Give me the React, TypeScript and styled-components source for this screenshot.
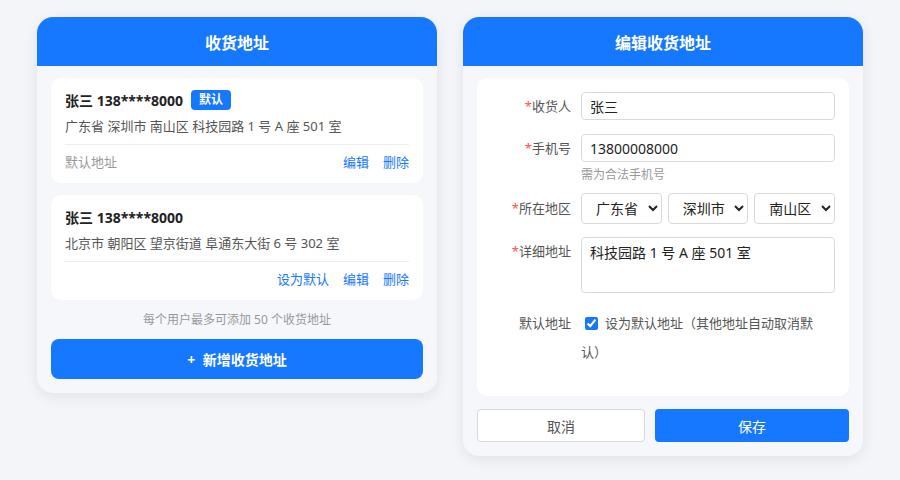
import React from 'react'
import styled, { createGlobalStyle } from 'styled-components'

const GlobalStyle = createGlobalStyle`
  html, body {
    margin: 0;
    padding: 0;
    background: #f4f5f9;
    font-family: "Noto Sans", "Noto Sans CJK SC", sans-serif;
    color: #222;
  }
  * { box-sizing: border-box; }
`

const BLUE = '#1677ff'

const Page = styled.div`
  display: flex;
  justify-content: center;
  align-items: flex-start;
  gap: 26px;
  padding-top: 17px;
  width: 900px;
  height: 480px;
`

const Card = styled.div`
  width: 400px;
  background: #f5f7fa;
  border-radius: 16px;
  overflow: hidden;
  box-shadow: 0 4px 14px rgba(0, 0, 0, 0.08);
`

const Header = styled.div`
  height: 49px;
  background: ${BLUE};
  color: #fff;
  font-size: 16px;
  font-weight: 700;
  display: flex;
  align-items: center;
  justify-content: center;
`

const Body = styled.div`
  padding: 12px 14px 14px;
  display: flex;
  flex-direction: column;
`

const AddrItem = styled.div`
  background: #fff;
  border-radius: 10px;
  padding: 12px 14px 0;
  margin-bottom: 12px;
`

const NameLine = styled.div`
  display: flex;
  align-items: center;
  gap: 8px;
  height: 20px;
  font-size: 14px;
  font-weight: 700;
  color: #222;
`

const Badge = styled.span`
  background: ${BLUE};
  color: #fff;
  font-size: 12px;
  font-weight: 700;
  padding: 0 8px;
  height: 20px;
  line-height: 20px;
  border-radius: 4px;
`

const AddrText = styled.div`
  font-size: 13px;
  color: #555;
  margin-top: 6px;
  padding-bottom: 8px;
  border-bottom: 1px solid #eceef2;
  line-height: 20px;
`

const ItemFoot = styled.div`
  display: flex;
  align-items: center;
  padding: 7px 0 11px;
  line-height: 20px;
  font-size: 13px;
`

const Muted = styled.span`
  color: #999;
  margin-right: auto;
`

const LinkBtn = styled.span`
  color: ${BLUE};
  margin-left: 14px;
  cursor: pointer;
`

const Note = styled.div`
  text-align: center;
  font-size: 12px;
  color: #999;
  margin: 0 0 11px;
  line-height: 16px;
`

const PrimaryBtn = styled.button<{ $bold?: boolean; $h: number; $radius: number }>`
  height: ${(p) => p.$h}px;
  background: ${BLUE};
  color: #fff;
  border: none;
  border-radius: ${(p) => p.$radius}px;
  font-family: inherit;
  font-size: 14px;
  font-weight: ${(p) => (p.$bold ? 700 : 400)};
  cursor: pointer;
`

const GhostBtn = styled.button`
  height: 33px;
  background: #fff;
  color: #555;
  border: 1px solid #d9d9d9;
  border-radius: 4px;
  font-family: inherit;
  font-size: 14px;
  cursor: pointer;
`

const FormPanel = styled.div`
  background: #fff;
  border-radius: 10px;
  padding: 14px 14px 29px;
`

const Row = styled.div<{ $mb: number }>`
  display: grid;
  grid-template-columns: 80px 1fr;
  column-gap: 10px;
  margin-bottom: ${(p) => p.$mb}px;
`

const Label = styled.label<{ $top?: number }>`
  text-align: right;
  font-size: 13px;
  color: #555;
  padding-top: ${(p) => p.$top ?? 6}px;
  line-height: 16px;
`

const Star = styled.span`
  color: #ff4d4f;
`

const Input = styled.input`
  width: 100%;
  height: 28px;
  border: 1px solid #d9d9d9;
  border-radius: 4px;
  padding: 0 8px;
  font-family: inherit;
  font-size: 14px;
  color: #222;
  outline: none;
`

const Hint = styled.div`
  font-size: 12px;
  color: #999;
  margin-top: 5px;
  line-height: 16px;
`

const Selects = styled.div`
  display: flex;
  gap: 6px;
`

const Select = styled.select`
  flex: 1;
  min-width: 0;
  height: 31px;
  border: 1px solid #d9d9d9;
  border-radius: 4px;
  padding: 0 4px 0 10px;
  font-family: inherit;
  font-size: 14px;
  color: #222;
  background: #fff;
`

const TextArea = styled.textarea`
  width: 100%;
  height: 56px;
  border: 1px solid #d9d9d9;
  border-radius: 4px;
  padding: 4px 8px;
  font-family: inherit;
  font-size: 14px;
  color: #222;
  resize: none;
  outline: none;
  display: block;
`

const CheckLabel = styled.label`
  display: block;
  font-size: 13px;
  color: #555;
  line-height: 29px;
  margin-top: -6px;
  line-break: anywhere;
`

const NoWrap = styled.span`
  white-space: nowrap;
`

const Check = styled.input`
  width: 13px;
  height: 13px;
  margin: 0 7px 0 4px;
  vertical-align: -2px;
  accent-color: ${BLUE};
`

const Actions = styled.div`
  display: grid;
  grid-template-columns: 168px 1fr;
  gap: 10px;
  margin-top: 13px;
`

const addresses = [
  {
    name: '张三 138****8000',
    addr: '广东省 深圳市 南山区 科技园路 1 号 A 座 501 室',
    def: true,
  },
  {
    name: '张三 138****8000',
    addr: '北京市 朝阳区 望京街道 阜通东大街 6 号 302 室',
    def: false,
  },
]

export default function App() {
  return (
    <>
      <GlobalStyle />
      <Page>
        <Card>
          <Header>收货地址</Header>
          <Body>
            {addresses.map((a, i) => (
              <AddrItem key={i}>
                <NameLine>
                  {a.name}
                  {a.def && <Badge>默认</Badge>}
                </NameLine>
                <AddrText>{a.addr}</AddrText>
                <ItemFoot>
                  <Muted>{a.def ? '默认地址' : ''}</Muted>
                  {!a.def && <LinkBtn>设为默认</LinkBtn>}
                  <LinkBtn>编辑</LinkBtn>
                  <LinkBtn>删除</LinkBtn>
                </ItemFoot>
              </AddrItem>
            ))}
            <Note>每个用户最多可添加 50 个收货地址</Note>
            <PrimaryBtn $bold $h={40} $radius={8}>
              +&nbsp; 新增收货地址
            </PrimaryBtn>
          </Body>
        </Card>

        <Card>
          <Header>编辑收货地址</Header>
          <Body>
            <FormPanel>
              <Row $mb={14}>
                <Label>
                  <Star>*</Star>收货人
                </Label>
                <Input defaultValue="张三" />
              </Row>
              <Row $mb={10}>
                <Label>
                  <Star>*</Star>手机号
                </Label>
                <div>
                  <Input defaultValue="13800008000" />
                  <Hint>需为合法手机号</Hint>
                </div>
              </Row>
              <Row $mb={13}>
                <Label $top={7}>
                  <Star>*</Star>所在地区
                </Label>
                <Selects>
                  <Select defaultValue="广东省">
                    <option>广东省</option>
                  </Select>
                  <Select defaultValue="深圳市">
                    <option>深圳市</option>
                  </Select>
                  <Select defaultValue="南山区">
                    <option>南山区</option>
                  </Select>
                </Selects>
              </Row>
              <Row $mb={22}>
                <Label>
                  <Star>*</Star>详细地址
                </Label>
                <TextArea defaultValue="科技园路 1 号 A 座 501 室" />
              </Row>
              <Row $mb={0}>
                <Label $top={0}>默认地址</Label>
                <CheckLabel>
                  <Check type="checkbox" defaultChecked />
                  设为默认地址（其他地址自动取消默<NoWrap>认）</NoWrap>
                </CheckLabel>
              </Row>
            </FormPanel>
            <Actions>
              <GhostBtn>取消</GhostBtn>
              <PrimaryBtn $h={33} $radius={4}>
                保存
              </PrimaryBtn>
            </Actions>
          </Body>
        </Card>
      </Page>
    </>
  )
}
